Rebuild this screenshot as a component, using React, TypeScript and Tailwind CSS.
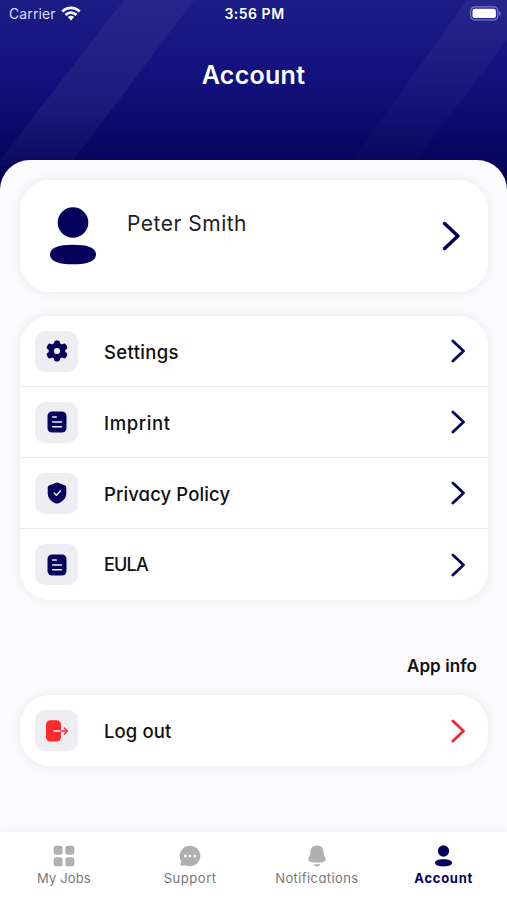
import React from 'react';

type IconProps = { className?: string };

function UserIcon({ className }: IconProps) {
  return (
    <svg viewBox="0 0 46 58" fill="currentColor" className={className}>
      <circle cx="23" cy="15.5" r="15.3" />
      <path d="M0 47.500C0 41 8 37.800 23 37.800S46 41 46 47.500 38 57.300 23 57.300 0 54 0 47.500Z" />
    </svg>
  );
}

function GearIcon() {
  return (
    <svg viewBox="0 0 22 22" className="h-[22px] w-[22px]">
      <g fill="#06025b">
        <circle cx="11" cy="11" r="8.3" />
        <rect x="8" y="0.4" width="6" height="21.2" rx="2.4" />
        <rect x="7.8" y="0" width="6.4" height="22" rx="2.4" transform="rotate(60 11 11)" />
        <rect x="7.8" y="0" width="6.4" height="22" rx="2.4" transform="rotate(120 11 11)" />
      </g>
      <circle cx="11" cy="11" r="3.1" fill="#eeeef2" />
    </svg>
  );
}

function DocumentIcon() {
  return (
    <svg viewBox="0 0 22 22" className="h-[22px] w-[22px]">
      <rect x="1.5" y="0.4" width="19" height="21.2" rx="4.6" fill="#06025b" />
      <path d="M6.7 6h3.6M6.7 11h8.8M6.7 15.8h8.8" stroke="#eeeef2" strokeWidth="1.5" strokeLinecap="round" />
    </svg>
  );
}

function ShieldIcon() {
  return (
    <svg viewBox="0 0 22 22" className="h-[22px] w-[22px]" fill="none">
      <path
        d="M9.9.7Q11 .2 12.1.7l6.5 2.5Q20.3 3.9 20.3 5.7v5.2c0 5-3.2 8.3-7.6 10.3q-1.7.7-3.4 0C4.9 19.2 1.7 15.9 1.7 10.9V5.7q0-1.8 1.7-2.5Z"
        fill="#06025b"
      />
      <path d="m8.2 11 2.2 2.2 4-4.1" stroke="#eeeef2" strokeWidth="1.5" strokeLinecap="round" strokeLinejoin="round" />
    </svg>
  );
}

function LogoutIcon() {
  return (
    <svg viewBox="0 0 22 22" className="h-[22px] w-[22px]" fill="none">
      <rect x="0" y="0.3" width="15" height="21.2" rx="4.4" fill="#fb2b2e" />
      <path d="M8 11h7" stroke="#f6f0f3" strokeWidth="1.5" strokeLinecap="round" />
      <path d="M15 11h6.3m-3-3 3 3-3 3" stroke="#fb2b2e" strokeWidth="1.5" strokeLinecap="round" strokeLinejoin="round" />
    </svg>
  );
}

function Chevron({ className }: IconProps) {
  return (
    <svg viewBox="0 0 14 24" fill="none" stroke="currentColor" strokeWidth="2.8" strokeLinecap="round" strokeLinejoin="round" className={className}>
      <path d="m1.9 2 10.600 10-10.600 10" />
    </svg>
  );
}

function GridIcon() {
  return (
    <svg viewBox="0 0 22 22" fill="#b0b0b0" className="h-[22px] w-[22px]">
      <rect x="0.7" y="0.7" width="9" height="9" rx="2.6" />
      <rect x="12.3" y="0.7" width="9" height="9" rx="2.6" />
      <rect x="0.7" y="12.3" width="9" height="9" rx="2.6" />
      <rect x="12.3" y="12.3" width="9" height="9" rx="2.6" />
    </svg>
  );
}

function ChatIcon() {
  return (
    <svg viewBox="0 0 22 22" className="h-[22px] w-[22px]">
      <path d="M11 .7a10.3 10.3 0 1 1-4.6 19.5L2.3 20.7Q1 20.8 1.4 19.6L2.2 16.4A10.3 10.3 0 0 1 11 .7Z" fill="#b0b0b0" />
      <g fill="#fff">
        <circle cx="6.2" cy="11" r="1.3" />
        <circle cx="11" cy="11" r="1.3" />
        <circle cx="15.8" cy="11" r="1.3" />
      </g>
    </svg>
  );
}

function BellIcon() {
  return (
    <svg viewBox="0 0 22 22" fill="#b0b0b0" className="h-[22px] w-[22px]">
      <path d="M11 .6C15 .6 17.6 3.4 17.6 7c0 2.800.5 3.400 1.400 5 1.600 2.900.300 4.600-2 5q-6 1-12 0c-2.300-.4-3.600-2.100-2-5 .9-1.600 1.400-2.200 1.400-5C4.400 3.400 7 .6 11 .6Z" />
      <path d="M7.800 19q3.200.5 6.400 0-.8 2.500-3.200 2.500T7.800 19Z" />
    </svg>
  );
}

const items = [
  { label: 'Settings', icon: <GearIcon />, text: 'mt-[2px] text-[18.5px] tracking-[0.35px]' },
  { label: 'Imprint', icon: <DocumentIcon />, text: 'mt-[2px] text-[18.5px] tracking-[0.6px]' },
  { label: 'Privacy Policy', icon: <ShieldIcon />, text: 'mt-[2px] text-[18.5px] tracking-[0.1px]' },
  { label: 'EULA', icon: <DocumentIcon />, text: 'text-[18px] tracking-[-0.8px]' },
];

const card = 'mx-5 w-[468px] rounded-[30px] bg-white shadow-[0_0_10px_2px_rgba(0,0,0,0.05)]';
const rounded = "font-['Inter',sans-serif] [font-feature-settings:'cv11']";

type RowProps = { label: string; icon: React.ReactNode; text: string; chevron: string };

function Row({ label, icon, text, chevron }: RowProps) {
  return (
    <div className="flex h-[71px] items-center pr-[23px] pl-[15px]">
      <div className="flex h-[41px] w-[43px] items-center justify-center rounded-[10px] bg-[#eeeef2]">{icon}</div>
      <span className={`ml-[26px] flex-1 leading-6 font-medium text-[#111] ${text}`}>{label}</span>
      <Chevron className={`h-6 w-[14px] ${chevron}`} />
    </div>
  );
}

export default function App() {
  return (
    <div className={`flex h-[900px] w-[507px] flex-col overflow-hidden bg-[#fbfbfd] ${rounded}`}>
      <header className="relative h-[195px] shrink-0 bg-linear-to-b from-[#1c1c87] via-[#11107a] via-45% to-[#04014f] text-white">
        <svg viewBox="0 0 507 195" className="absolute inset-0 h-full w-full">
          <defs>
            <linearGradient id="beam" x1="0" y1="0" x2="0" y2="1">
              <stop offset="0" stopColor="#fff" stopOpacity="0.04" />
              <stop offset="0.65" stopColor="#fff" stopOpacity="0.055" />
              <stop offset="1" stopColor="#fff" stopOpacity="0.02" />
            </linearGradient>
            <linearGradient id="beam-soft" x1="0" y1="0" x2="0" y2="1">
              <stop offset="0" stopColor="#fff" stopOpacity="0.045" />
              <stop offset="1" stopColor="#fff" stopOpacity="0.01" />
            </linearGradient>
          </defs>
          <path d="M124 0h70L70 165H0v-5Z" fill="url(#beam)" />
          <path d="M467 0h40v40L412 165h-63Z" fill="url(#beam-soft)" />
        </svg>
        <div className="relative grid h-7 grid-cols-3 items-center pr-[6px] pl-[9px] font-['Inter',sans-serif] text-[14px] leading-5 [font-feature-settings:'cv11'_0]">
          <div className="flex items-center gap-[5px]">
            <span className="tracking-[0.1px] text-[#dedef5]">Carrier</span>
            <svg viewBox="0 0 20 15" className="mb-[2px] h-[15px] w-5" fill="none" stroke="#fff" strokeWidth="2.700">
              <path d="M1.300 5.500C6.400.6 13.600.6 18.700 5.500" />
              <path d="M4.500 8.900c3.200-3 7.800-3 11 0" />
              <path d="M6.900 11.100a4.500 4.500 0 0 1 6.200 0L10 14.400Z" fill="#fff" stroke="none" />
            </svg>
          </div>
          <span className="pr-px text-center font-semibold tracking-[0.5px]">3:56 PM</span>
          <div className="flex justify-end">
            <svg viewBox="0 0 31 15" className="mb-[2px] h-[15px] w-[31px]">
              <rect x="0.700" y="0.900" width="27" height="13" rx="3.800" fill="none" stroke="#7a79bd" strokeWidth="1.200" />
              <rect x="2.500" y="2.700" width="23.400" height="9.400" rx="2.200" fill="#fff" />
              <path d="M29 5q1.600.8 1.600 2.400T29 9.800Z" fill="#7a79bd" />
            </svg>
          </div>
        </div>
        <h1 className="relative mt-[31px] text-center font-['Inter',sans-serif] text-[25px] leading-8 font-semibold tracking-[0.3px] [font-feature-settings:'cv11'_0]">
          Account
        </h1>
      </header>

      <main className="relative z-10 -mt-[35px] flex-1 rounded-t-[30px] bg-[#fbfbfd] pt-5">
        <section className={`${card} flex h-[112px] items-center pr-[28px] pl-[30px]`}>
          <UserIcon className="h-[58px] w-[46px] text-[#06025b]" />
          <p className="mb-6 ml-[31px] flex-1 text-[21px] leading-7 tracking-[0.5px] text-[#222]">Peter Smith</p>
          <Chevron className="h-[30px] w-[18px] text-[#06025b]" />
        </section>

        <section className={`${card} mt-6 divide-y divide-[#e9e9ed]`}>
          {items.map((item) => (
            <Row key={item.label} {...item} chevron="text-[#06025b]" />
          ))}
        </section>

        <p className="mt-[54px] mr-[30px] text-right font-['Inter',sans-serif] text-[17px] leading-6 font-semibold tracking-[0.1px] text-[#111] [font-feature-settings:'cv11'_0]">
          App info
        </p>

        <section className={`${card} mt-[17px]`}>
          <Row label="Log out" icon={<LogoutIcon />} text="text-[18.5px] tracking-[0.1px]" chevron="text-[#ee2a31]" />
        </section>
      </main>

      <nav className="relative z-20 grid h-[68px] shrink-0 grid-cols-4 bg-white pt-[13px] text-center text-[13px] leading-5 text-[#777] shadow-[0_-2px_9px_rgba(0,0,0,0.035)]">
        <div className="flex flex-col items-center gap-px pl-px">
          <GridIcon />
          <span className="tracking-[0.15px]">My Jobs</span>
        </div>
        <div className="flex flex-col items-center gap-px">
          <ChatIcon />
          <span className="tracking-[0.55px]">Support</span>
        </div>
        <div className="flex flex-col items-center gap-px">
          <BellIcon />
          <span className="tracking-[0.4px]">Notifications</span>
        </div>
        <div className="flex flex-col items-center gap-px text-[#06025b]">
          <UserIcon className="h-[22px] w-[17px]" />
          <span className="font-bold tracking-[0.7px]">Account</span>
        </div>
      </nav>
    </div>
  );
}
